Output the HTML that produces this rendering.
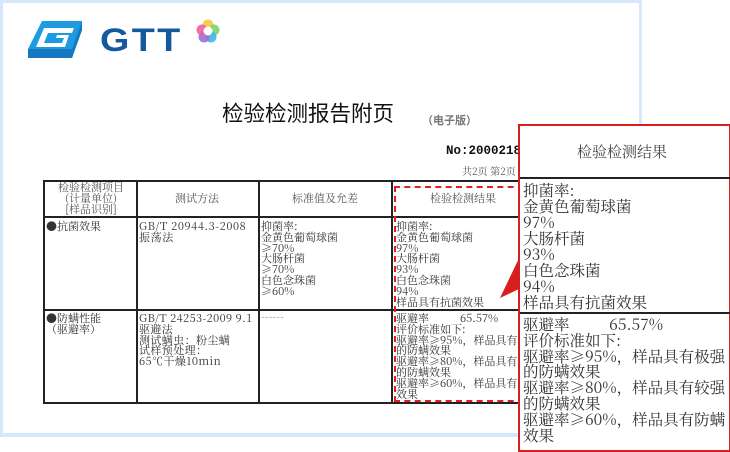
<!DOCTYPE html>
<html><head><meta charset="utf-8">
<style>
*{margin:0;padding:0;box-sizing:border-box}
body{width:730px;height:451px;background:#fff;position:relative;overflow:hidden;font-family:"Noto Serif CJK SC","Liberation Serif",serif;color:#222}
.frame{position:absolute;left:0;top:0;width:642px;height:437px;background:#d6e8fb}
.page{position:absolute;left:3px;top:3px;width:636px;height:430px;background:#fff}
.abs{position:absolute;white-space:nowrap}
.t{position:absolute;font-family:"Noto Serif CJK SC",serif;font-size:11px;line-height:10.8px;color:#333;white-space:nowrap}
.vl{position:absolute;width:1.5px;background:#222}
.hl{position:absolute;height:1.5px;background:#222}
.big{position:absolute;font-family:"Noto Serif CJK SC",serif;font-size:15.5px;line-height:16px;color:#333;white-space:nowrap;left:523px}
</style></head><body>
<div class="frame"></div><div class="page"></div>

<svg class="abs" style="left:28px;top:21px" width="56" height="37" viewBox="0 0 56 37">
<polygon points="14,0 54,0 54,9 44,37 0,37 0,28" fill="#1e9be0"/>
<polygon points="0,28 44,28 44,37 0,37" fill="#1479c2"/>
<polygon points="44,28 54,0 54,9 44,37" fill="#1479c2"/>
<path d="M16,7 L46,7 L44,12 L20,12 L16,22 L34,22 L36,17 L28,17 L29,14 L41,14 L37,26 L8,26 Z" fill="#fff"/>
</svg>
<div class="abs" style="left:100px;top:24px;font-family:'Liberation Sans',sans-serif;font-weight:bold;font-size:32px;letter-spacing:2px;color:#14589e;line-height:32px;transform:scaleX(1.18);transform-origin:left">GTT</div>
<svg class="abs" style="left:196px;top:19px" width="24" height="24" viewBox="0 0 24 24">
<circle cx="12" cy="6" r="5.5" fill="#f7c63b" opacity=".9"/>
<circle cx="18" cy="11" r="5.5" fill="#7fd36b" opacity=".9"/>
<circle cx="15" cy="18" r="5.5" fill="#3fb6e8" opacity=".9"/>
<circle cx="8" cy="18" r="5.5" fill="#9b6fd8" opacity=".9"/>
<circle cx="6" cy="11" r="5.5" fill="#ef5f9b" opacity=".9"/>
<circle cx="12" cy="12" r="4.5" fill="#fff"/>
</svg>

<div class="abs" style="left:222px;top:98px;font-size:21.5px;line-height:30px;font-family:'Noto Sans CJK SC',sans-serif;color:#111">检验检测报告附页</div>
<div class="abs" style="left:422px;top:112px;font-size:11px;font-weight:bold;color:#777;font-family:'Liberation Sans','Noto Sans CJK SC',sans-serif">（电子版）</div>
<div class="abs" style="left:446px;top:144px;font-size:12.5px;font-weight:bold;color:#111;width:75px;overflow:hidden;font-family:'Liberation Mono',monospace">No:20002182</div>
<div class="abs" style="left:462px;top:163px;font-size:10px;color:#555;width:58px;overflow:hidden">共2页 第2页</div>

<div class="hl" style="left:43px;top:180px;width:480px"></div>
<div class="hl" style="left:43px;top:216px;width:480px"></div>
<div class="hl" style="left:43px;top:309px;width:480px"></div>
<div class="hl" style="left:43px;top:402px;width:480px"></div>
<div class="vl" style="left:43px;top:180px;height:224px"></div>
<div class="vl" style="left:136px;top:180px;height:224px"></div>
<div class="vl" style="left:258px;top:180px;height:224px"></div>
<div class="vl" style="left:391px;top:180px;height:224px"></div>
<div class="abs" style="left:394px;top:186px;width:130px;height:216px;border:2px dashed #e02020;border-right:none"></div>

<div class="t" style="left:48px;top:182px;text-align:center;width:86px;color:#555">检验检测项目<br>(计量单位)<br>[样品识别]</div>
<div class="t" style="left:175px;top:193px;color:#555">测试方法</div>
<div class="t" style="left:292px;top:193px;color:#555">标准值及允差</div>
<div class="t" style="left:430px;top:193px;color:#555">检验检测结果</div>

<div class="t" style="left:46px;top:221px">●抗菌效果</div>
<div class="t" style="left:139px;top:221px;letter-spacing:0.6px">GB/T 20944.3-2008<br>振荡法</div>
<div class="t" style="left:261px;top:221px">抑菌率:<br>金黄色葡萄球菌<br>≥70%<br>大肠杆菌<br>≥70%<br>白色念珠菌<br>≥60%</div>
<div class="t" style="left:396px;top:221px;width:122px;overflow:hidden">抑菌率:<br>金黄色葡萄球菌<br>97%<br>大肠杆菌<br>93%<br>白色念珠菌<br>94%<br>样品具有抗菌效果</div>

<div class="t" style="left:46px;top:313px">●防螨性能<br>（驱避率）</div>
<div class="t" style="left:139px;top:313px;letter-spacing:0.4px">GB/T 24253-2009 9.1<br>驱避法<br>测试螨虫：粉尘螨<br>试样预处理：<br>65℃干燥10min</div>
<div class="t" style="left:261px;top:311px;color:#888">------</div>
<div class="t" style="left:396px;top:313px;width:122px;overflow:hidden">驱避率&nbsp;&nbsp;&nbsp;&nbsp;&nbsp;&nbsp;&nbsp;&nbsp;&nbsp;&nbsp;&nbsp;65.57%<br>评价标准如下:<br>驱避率≥95%，样品具有极强<br>的防螨效果<br>驱避率≥80%，样品具有较强<br>的防螨效果<br>驱避率≥60%，样品具有防螨<br>效果</div>

<svg class="abs" style="left:495px;top:250px" width="30" height="52" viewBox="0 0 30 52"><polygon points="5,48 26,4 26,38" fill="#d81e1e"/></svg>

<div class="abs" style="left:518px;top:124px;width:213px;height:328px;background:#fff;border:2px solid #d42020"></div>
<div class="abs" style="left:520px;top:177px;width:210px;height:1.5px;background:#222"></div>
<div class="abs" style="left:520px;top:312px;width:210px;height:1.5px;background:#222"></div>
<div class="abs" style="left:577px;top:141px;font-size:15px;color:#444">检验检测结果</div>
<div class="big" style="top:182px">抑菌率:<br>金黄色葡萄球菌<br>97%<br>大肠杆菌<br>93%<br>白色念珠菌<br>94%<br>样品具有抗菌效果</div>
<div class="big" style="top:317px;line-height:15.8px">驱避率&nbsp;&nbsp;&nbsp;&nbsp;&nbsp;&nbsp;&nbsp;&nbsp;&nbsp;&nbsp;65.57%<br>评价标准如下:<br>驱避率≥95%，样品具有极强<br>的防螨效果<br>驱避率≥80%，样品具有较强<br>的防螨效果<br>驱避率≥60%，样品具有防螨<br>效果</div>
</body></html>
